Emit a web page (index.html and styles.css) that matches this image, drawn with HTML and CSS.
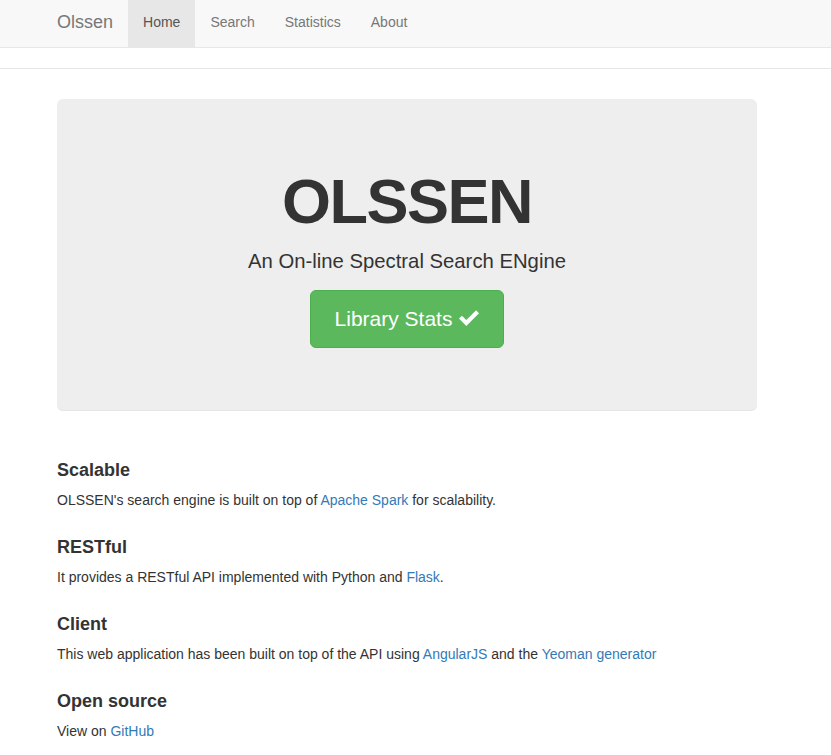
FILE: index.html
```html
<!DOCTYPE html>
<html lang="en">
<head>
<meta charset="utf-8">
<title>Olssen</title>
<link rel="stylesheet" href="styles.css">
</head>
<body>
<div class="header">
  <nav class="navbar">
    <div class="container nav-inner">
      <a class="brand" href="#">Olssen</a>
      <ul class="nav">
        <li><a class="active" href="#">Home</a></li>
        <li><a href="#">Search</a></li>
        <li><a href="#">Statistics</a></li>
        <li><a href="#">About</a></li>
      </ul>
    </div>
  </nav>
</div>
<div class="container">
  <div class="jumbotron">
    <h1>OLSSEN</h1>
    <p class="lead">An On-line Spectral Search ENgine</p>
    <p class="btn-wrap"><a class="btn" href="#">Library Stats <svg class="check" viewBox="0 0 20 16" width="20" height="16"><path d="M0 8.6 L2.9 5.7 L7.3 10.1 L17.1 0.3 L20 3.2 L7.3 15.9 Z" fill="#fff"/></svg></a></p>
  </div>
  <div class="marketing">
    <h4>Scalable</h4>
    <p>OLSSEN's search engine is built on top of <a href="#">Apache Spark</a> for scalability.</p>
    <h4>RESTful</h4>
    <p>It provides a RESTful API implemented with Python and <a href="#">Flask</a>.</p>
    <h4>Client</h4>
    <p>This web application has been built on top of the API using <a href="#">AngularJS</a> and the <a href="#">Yeoman generator</a></p>
    <h4>Open source</h4>
    <p>View on <a href="#">GitHub</a></p>
  </div>
</div>
</body>
</html>
```
FILE: styles.css
```css
* { box-sizing: border-box; }
html, body { margin: 0; padding: 0; }
body {
  font-family: "Liberation Sans", Arial, Helvetica, sans-serif;
  font-size: 14px;
  line-height: 1.42857;
  color: #333;
  background: #fff;
}
a { color: #337ab7; text-decoration: none; }
.container {
  width: 700px;
  margin-left: 57px;
}
.header {
  border-bottom: 1px solid #e5e5e5;
  margin-bottom: 30px;
}
.navbar {
  background: #f8f8f8;
  border-bottom: 1px solid #e7e7e7;
  margin-bottom: 20px;
  height: 48px;
}
.nav-inner {
  display: flex;
  align-items: stretch;
  height: 47px;
}
.brand {
  color: #777;
  font-size: 18px;
  line-height: 20px;
  padding: 12px 15px 15px 15px;
  margin-left: -15px;
}
.nav {
  display: flex;
  list-style: none;
  margin: 0;
  padding: 0;
}
.nav li { display: flex; }
.nav a {
  color: #777;
  line-height: 20px;
  padding: 12px 15px 15px;
}
.nav a.active {
  background: #e7e7e7;
  color: #555;
}
.jumbotron {
  background: #eee;
  border-radius: 6px;
  border-bottom: 1px solid #e5e5e5;
  padding: 48px 60px 47px;
  text-align: center;
  margin-bottom: 40px;
}
.jumbotron h1 {
  font-size: 63px;
  font-weight: 700;
  letter-spacing: -1.5px;
  line-height: 1.1;
  margin: 20px 0 10px;
  color: #333;
}
.jumbotron p {
  font-size: 20.3px;
  line-height: 30px;
  font-weight: 300;
  margin: 0 0 14px;
}
.jumbotron .btn-wrap { margin-bottom: 15px; line-height: 1; }
.btn {
  display: inline-flex;
  align-items: center;
  gap: 7px;
  background: #5cb85c;
  border: 1px solid #4cae4c;
  border-radius: 6px;
  color: #fff;
  font-size: 21px;
  line-height: 28px;
  padding: 14px 24px;
  height: 58px;
}
.check { display: block; margin-top: -2px; }
.marketing { margin: 40px 0; display: flow-root; }
.marketing h4 {
  font-size: 18px;
  font-weight: 700;
  line-height: 19px;
  margin: 10px 0 10px;
}
.marketing p { margin: 0 0 10px; line-height: 20px; }
.marketing p + h4 { margin-top: 28px; }
```
